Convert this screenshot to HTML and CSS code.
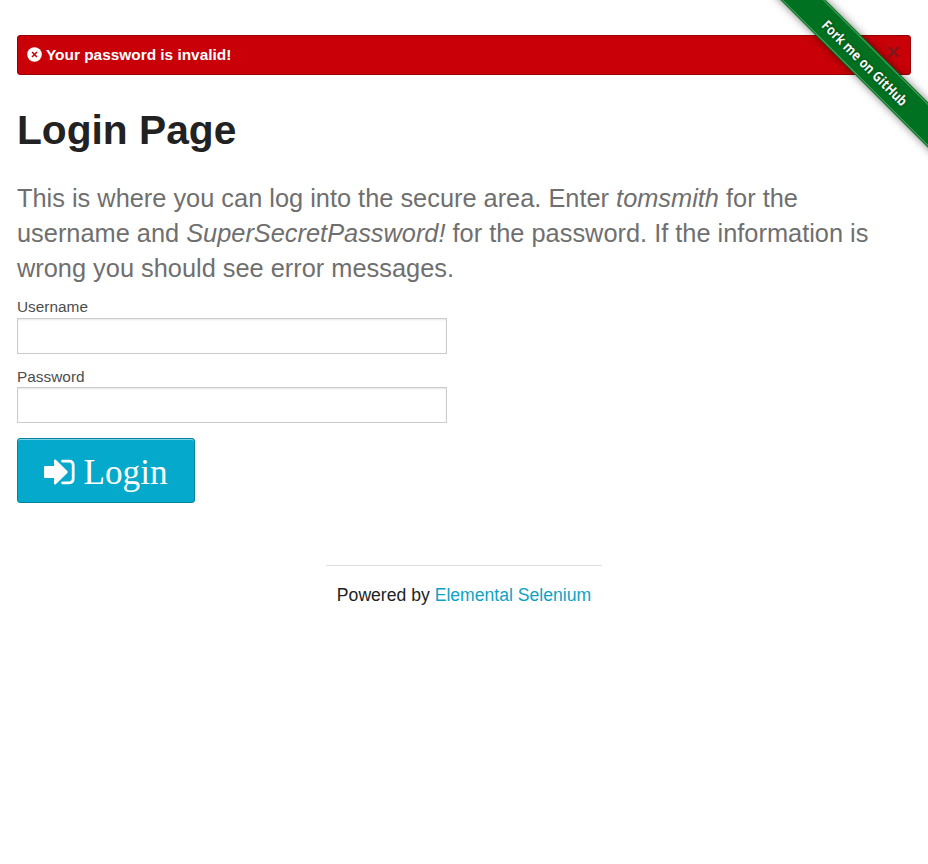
FILE: index.html
```html
<!DOCTYPE html>
<html lang="en">
<head>
<meta charset="utf-8">
<title>The Internet</title>
<link rel="stylesheet" href="styles.css">
</head>
<body>
<div class="alert">
  <svg class="alert-icon" viewBox="0 0 15 15" aria-hidden="true"><circle cx="7.5" cy="7.5" r="7.3" fill="#fff"/><path d="M5 5l5 5M10 5l-5 5" stroke="#c60009" stroke-width="1.5"/></svg>
  <span>Your password is invalid!</span>
  <a class="close" href="#">×</a>
</div>
<a class="ribbon" href="#"><span>Fork me on GitHub</span></a>
<main class="content">
  <h2>Login Page</h2>
  <h4>This is where you can log into the secure area. Enter <em>tomsmith</em> for the username and <em>SuperSecretPassword!</em> for the password. If the information is wrong you should see error messages.</h4>
  <form>
    <label for="username">Username</label>
    <input type="text" id="username">
    <label for="password">Password</label>
    <input type="password" id="password">
    <button type="button">
      <svg class="login-icon" viewBox="0 0 31 26" aria-hidden="true"><path d="M1.3 7H10V1.5Q10.3 0 11.8.8L23.3 12Q24.2 13 23.3 14L11.8 25.2Q10.3 26 10 24.500V19H1.300Q0 19 0 17.700V8.300Q0 7 1.300 7Z" fill="#fff"/><path d="M18.500 2.200H25Q29.200 2.200 29.200 6.400V19.600Q29.200 23.800 25 23.800H18.500" fill="none" stroke="#fff" stroke-width="2.800" stroke-linecap="round"/></svg>
      <span>Login</span>
    </button>
  </form>
</main>
<footer>Powered by <a href="#">Elemental Selenium</a></footer>
</body>
</html>
```
FILE: styles.css
```css
* { box-sizing: border-box; }
body {
  margin: 0;
  padding: 35px 17px 0;
  min-height: 864px;
  overflow: hidden;
  position: relative;
  background: #fff;
  color: #222;
  font-family: "Liberation Sans", Arial, sans-serif;
  font-size: 17.6px;
}
.alert {
  display: flex;
  align-items: center;
  height: 40px;
  padding: 0 10px 1px 9px;
  border: 1px solid #970006;
  border-radius: 3px;
  background: #c90008;
  color: #fff;
  font-size: 15.4px;
  font-weight: bold;
}
.alert-icon { width: 15px; height: 15px; margin-right: 4px; }
.alert span { padding-top: 1px; }
.close {
  margin: -6px 0 0 auto;
  color: #333;
  opacity: .5;
  font-size: 24px;
  font-weight: normal;
  line-height: 1;
  text-decoration: none;
  -webkit-text-stroke: .5px #333;
}
.ribbon {
  position: absolute;
  left: 745px;
  top: 46px;
  width: 240px;
  height: 32px;
  display: flex;
  align-items: center;
  justify-content: center;
  transform: rotate(45deg);
  background: #007120;
  box-shadow: 0 0 8px rgba(0, 0, 0, .5);
  color: #f4f8f4;
  font: 700 14px "Noto Sans", sans-serif;
  text-decoration: none;
  text-shadow: 0 0 3px rgba(0, 0, 0, .6);
}
.ribbon::before {
  content: "";
  position: absolute;
  inset: 1px 0;
  border: solid #4fa05f;
  border-width: 1px 0;
}
.ribbon span { margin-left: 1px; transform: scaleX(.87); white-space: nowrap; }
h2 {
  margin: 26.500px 0 0;
  font-size: 40.7px;
  line-height: 57px;
}
h4 {
  margin: 22px 0 0;
  color: #6f6f6f;
  font-size: 25.36px;
  font-weight: normal;
  line-height: 35.42px;
}
form { width: 430px; margin-top: 8.500px; }
label {
  display: block;
  color: #4d4d4d;
  font-size: 15.4px;
  line-height: 23px;
}
input {
  display: block;
  width: 100%;
  height: 36px;
  margin: 0 0 11px;
  border: 1px solid #ccc;
  border-radius: 0;
  background: #fff;
  box-shadow: inset 0 1px 2px rgba(0, 0, 0, .1);
}
#password { margin-top: -1px; }
button {
  display: flex;
  align-items: center;
  width: 178px;
  height: 65px;
  margin-top: 15px;
  padding: 2px 0 0 26px;
  border: 1px solid #0083a0;
  border-radius: 3px;
  background: #04a9cb;
  box-shadow: inset 0 1px 0 rgba(255, 255, 255, .5);
  color: #fff;
  font: 35.2px/39px "Liberation Serif", "Times New Roman", serif;
}
button span { padding-top: 2px; }
.login-icon { width: 31px; height: 26px; margin: 0 8.500px 0 0; }
footer {
  width: 276px;
  margin: 62px auto 0;
  padding-top: 18px;
  border-top: 1px solid #ddd;
  text-align: center;
  line-height: 22px;
}
footer a { color: #0da3c4; text-decoration: none; }
```
